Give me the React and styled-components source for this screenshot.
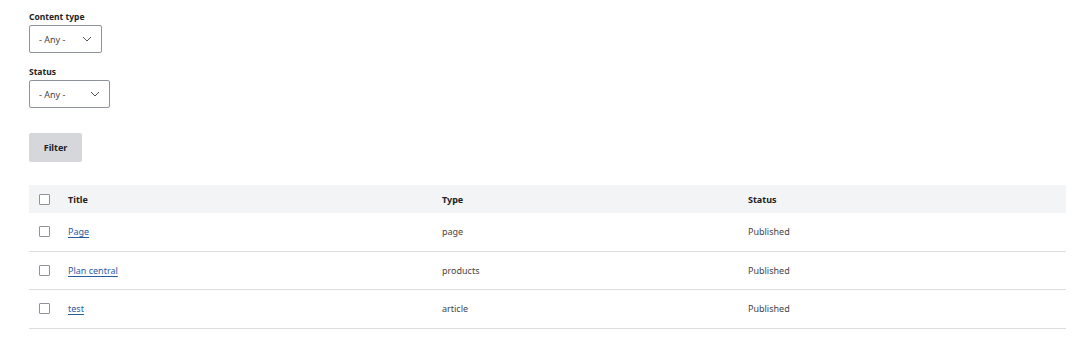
import React from 'react';
import styled, { createGlobalStyle } from 'styled-components';

const GlobalStyle = createGlobalStyle`
  body {
    margin: 0;
    background: #fff;
    font-family: "Noto Sans", "Open Sans", sans-serif;
    color: #333;
  }
`;

const Page = styled.div`
  padding: 10px 24px 0 29px;
  width: 1037px;
`;

const Field = styled.div`
  display: flex;
  flex-direction: column;
  align-items: flex-start;
  margin-bottom: ${(p) => p.gap}px;
`;

const Label = styled.label`
  font-size: 8.5px;
  font-weight: 700;
  color: #222;
  line-height: 14px;
  margin-bottom: 1px;
`;

const Select = styled.div`
  box-sizing: border-box;
  width: ${(p) => p.w}px;
  height: 28px;
  border: 1px solid #8e929c;
  border-radius: 2px;
  display: flex;
  align-items: center;
  justify-content: space-between;
  padding: 0 9px 0 9px;
  font-size: 9px;
  color: #444;
`;

const Chevron = () => (
  <svg width="10" height="6" viewBox="0 0 10 6">
    <path d="M1 1l4 4 4-4" fill="none" stroke="#555" strokeWidth="1" />
  </svg>
);

const FilterButton = styled.button`
  box-sizing: border-box;
  width: 53px;
  height: 29px;
  border: none;
  border-radius: 2px;
  background: #d6d7da;
  font-family: inherit;
  font-size: 9px;
  font-weight: 700;
  color: #222;
  margin-top: 25px;
  padding: 0;
`;

const Table = styled.div`
  margin-top: 23px;
  width: 1037px;
`;

const Row = styled.div`
  display: grid;
  grid-template-columns: 39px 374px 306px 1fr;
  align-items: center;
  height: ${(p) => (p.head ? 28 : 38.5)}px;
  background: ${(p) => (p.head ? '#f3f4f6' : '#fff')};
  border-bottom: ${(p) => (p.head ? 'none' : '1px solid #dcdde0')};
  box-sizing: border-box;
  font-size: 9px;
  font-weight: ${(p) => (p.head ? 700 : 400)};
  color: ${(p) => (p.head ? '#222' : '#444')};
`;

const Check = styled.span`
  display: block;
  width: 9px;
  height: 9px;
  border: 1px solid #8e929c;
  border-radius: 1px;
  margin-left: 10px;
  background: #fff;
`;

const Link = styled.a`
  color: #2a5d9f;
  text-decoration: underline;
  text-underline-offset: 2px;
`;

const rows = [
  { title: 'Page', type: 'page', status: 'Published' },
  { title: 'Plan central', type: 'products', status: 'Published' },
  { title: 'test', type: 'article', status: 'Published' },
];

export default function App() {
  return (
    <Page>
      <GlobalStyle />
      <Field gap={12}>
        <Label>Content type</Label>
        <Select w={73}>
          <span>- Any -</span>
          <Chevron />
        </Select>
      </Field>
      <Field gap={0}>
        <Label>Status</Label>
        <Select w={81}>
          <span>- Any -</span>
          <Chevron />
        </Select>
      </Field>
      <FilterButton>Filter</FilterButton>
      <Table>
        <Row head>
          <Check />
          <span>Title</span>
          <span>Type</span>
          <span>Status</span>
        </Row>
        {rows.map((r) => (
          <Row key={r.title}>
            <Check />
            <span>
              <Link href="#">{r.title}</Link>
            </span>
            <span>{r.type}</span>
            <span>{r.status}</span>
          </Row>
        ))}
      </Table>
    </Page>
  );
}
